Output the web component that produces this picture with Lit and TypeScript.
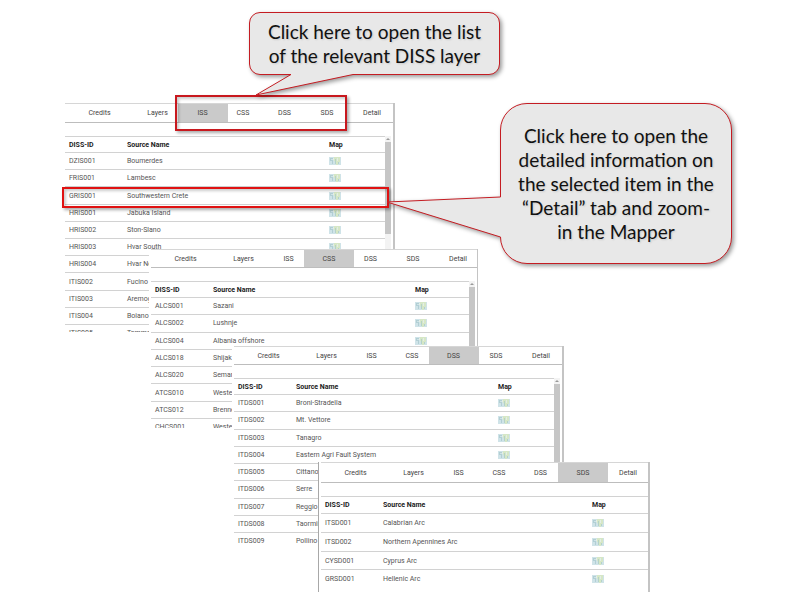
import { LitElement, html, css, svg } from "lit";
import { customElement, property } from "lit/decorators.js";

type Row = [id: string, name: string];

const TABS = ["Credits", "Layers", "ISS", "CSS", "DSS", "SDS", "Detail"];

const ISS: Row[] = [
  ["DZIS001", "Boumerdes"],
  ["FRIS001", "Lambesc"],
  ["GRIS001", "Southwestern Crete"],
  ["HRIS001", "Jabuka Island"],
  ["HRIS002", "Ston-Slano"],
  ["HRIS003", "Hvar South"],
  ["HRIS004", "Hvar North"],
  ["ITIS002", "Fucino"],
  ["ITIS003", "Aremogna"],
  ["ITIS004", "Boiano"],
  ["ITIS005", "Tammaro"],
];
const CSS_ROWS: Row[] = [
  ["ALCS001", "Sazani"],
  ["ALCS002", "Lushnje"],
  ["ALCS004", "Albania offshore"],
  ["ALCS018", "Shijak"],
  ["ALCS020", "Seman"],
  ["ATCS010", "Western"],
  ["ATCS012", "Brenner"],
  ["CHCS001", "Western"],
];
const DSS: Row[] = [
  ["ITDS001", "Broni-Stradella"],
  ["ITDS002", "Mt. Vettore"],
  ["ITDS003", "Tanagro"],
  ["ITDS004", "Eastern Agri Fault System"],
  ["ITDS005", "Cittanova"],
  ["ITDS006", "Serre"],
  ["ITDS007", "Reggio"],
  ["ITDS008", "Taormina"],
  ["ITDS009", "Pollino"],
];
const SDS: Row[] = [
  ["ITSD001", "Calabrian Arc"],
  ["ITSD002", "Northern Apennines Arc"],
  ["CYSD001", "Cyprus Arc"],
  ["GRSD001", "Hellenic Arc"],
];

const mapIcon = html`<svg class="map" viewBox="0 0 12 8" aria-hidden="true">
  ${svg`<rect width="12" height="8" fill="#cfe3e8"/>
  <path d="M5 0h6v5H9v3H7V5L5 4z" fill="#d6e7c6"/>
  <path d="M1 1h3v1H2v1h2v4H3V4H1z" fill="#b2cfd4"/>
  <path d="M6 2h1v5H6zM9 5h1v2H9z" fill="#b4d2c8"/>
  <path d="M4 1h1v2H4zM8 1h1v3H8z" fill="#e2eee6"/>`}
</svg>`;

@customElement("source-panel")
export class SourcePanel extends LitElement {
  @property() active = "ISS";
  @property({ attribute: false }) rows: Row[] = [];
  @property({ type: Boolean }) scroll = false;

  static styles = css`
    :host {
      display: block;
      box-sizing: border-box;
      overflow: hidden;
      padding-left: 2px;
      background: #fff;
      color: #555;
      font: 7px/10px Roboto, "Liberation Sans", sans-serif;
    }
    .frame {
      box-sizing: border-box;
      height: 100%;
      border-right: var(--edge, 2px) solid #c4c4c4;
    }
    .tabs {
      display: grid;
      grid-template-columns: 69px 47px 43px 38px 45px 40px 1fr;
      height: var(--tabs, 17px);
      border-top: 1px solid #d6d6d6;
      border-bottom: 1px solid #bdbdbd;
      margin-bottom: 13px;
    }
    button {
      justify-self: center;
      width: 50px;
      padding: 0;
      border: 0;
      background: none;
      color: #444;
      font: inherit;
    }
    .on {
      background: #cacaca;
    }
    .body {
      display: flex;
      align-items: flex-start;
    }
    table {
      flex: 1;
      height: var(--table, auto);
      border-collapse: collapse;
      table-layout: fixed;
    }
    th,
    td {
      padding: 0 0 0 4px;
      border-top: 1px solid #d2d2d2;
      text-align: left;
      white-space: nowrap;
    }
    th {
      height: var(--head, 15px);
      color: #222;
      font-weight: 700;
    }
    .id {
      width: 54px;
    }
    .where {
      width: var(--where, 56px);
    }
    .map {
      display: block;
      width: 12px;
      height: 8px;
    }
    .bar {
      align-self: stretch;
      width: 6px;
      margin-right: 2px;
      background: #f3f3f3;
    }
    .arrow {
      display: block;
      width: 6px;
      height: 6px;
    }
    .thumb {
      height: var(--thumb, 100%);
      background: #c6c6c6;
    }
  `;

  render() {
    return html`<div class="frame">
      <div class="tabs" role="tablist">
        ${TABS.map(
          (t) =>
            html`<button role="tab" class=${t === this.active ? "on" : ""} aria-selected=${t === this.active}>${t}</button>`
        )}
      </div>
      <div class="body">
        <table>
          <thead>
            <tr><th class="id">DISS-ID</th><th>Source Name</th><th class="where">Map</th></tr>
          </thead>
          <tbody>
            ${this.rows.map(([id, name]) => html`<tr><td>${id}</td><td>${name}</td><td>${mapIcon}</td></tr>`)}
          </tbody>
        </table>
        ${this.scroll
          ? html`<div class="bar">
              <svg class="arrow" viewBox="0 0 6 6" aria-hidden="true"><path d="M1 4l2-2 2 2z" fill="#999" /></svg>
              <div class="thumb"></div>
            </div>`
          : ""}
      </div>
    </div>`;
  }
}

@customElement("app-root")
export class AppRoot extends LitElement {
  static styles = css`
    :host {
      display: block;
      position: relative;
      min-height: 100vh;
      overflow: hidden;
      background: #fff;
    }
    source-panel {
      position: absolute;
      width: 332px;
    }
    .iss {
      left: 63px;
      top: 103px;
      height: 229px;
      --tabs: 18px;
      --table: 205px;
      --thumb: 92px;
    }
    .css {
      left: 149px;
      top: 249px;
      width: 329px;
      height: 179px;
      --edge: 1px;
      --where: 54px;
      --table: 154px;
    }
    .dss {
      left: 232px;
      top: 346px;
      height: 200px;
      --table: 171px;
    }
    .sds {
      left: 318px;
      top: 462px;
      height: 130px;
      border-left: 1px solid #a8a8a8;
      --tabs: 19px;
      --head: 16px;
      --table: 92px;
    }
    .mark {
      position: absolute;
      box-sizing: border-box;
      border: 2px solid #c8181e;
      box-shadow: 2px 2px 3px #0005, inset 2px 2px 3px #0003;
    }
    .mark-tabs {
      left: 175px;
      top: 95px;
      width: 172px;
      height: 36px;
    }
    .mark-row {
      left: 62px;
      top: 187px;
      width: 327px;
      height: 21px;
      border-color: #e01212;
    }
    .note {
      position: absolute;
      display: flex;
      align-items: center;
      justify-content: center;
      color: #111;
      font: 19px/24px Lato, "Liberation Sans", sans-serif;
      text-align: center;
      white-space: nowrap;
      text-shadow: 1px 1px 2px #0002;
    }
    .note p {
      position: relative;
      margin: 0;
    }
    .bubble {
      position: absolute;
      inset: 0;
      width: 100%;
      height: 100%;
      overflow: visible;
      fill: #e8e8e8;
      stroke: #c41c22;
      filter: drop-shadow(2px 2px 2px #0006);
    }
    .note-tabs {
      left: 249px;
      top: 12px;
      width: 251px;
      height: 63px;
    }
    .note-row {
      left: 500px;
      top: 103px;
      width: 232px;
      height: 161px;
    }
  `;

  render() {
    return html`
      <source-panel class="iss" active="ISS" scroll .rows=${ISS}></source-panel>
      <source-panel class="css" active="CSS" scroll .rows=${CSS_ROWS}></source-panel>
      <source-panel class="dss" active="DSS" scroll .rows=${DSS}></source-panel>
      <source-panel class="sds" active="SDS" .rows=${SDS}></source-panel>
      <div class="mark mark-tabs"></div>
      <div class="mark mark-row"></div>
      <div class="note note-tabs">
        <svg class="bubble" viewBox="0 0 251 63" aria-hidden="true">
          <path d="M11 .5H240a10.500 10.500 0 0 1 10.500 10.500V52a10.500 10.500 0 0 1-10.500 10.500H104L7 83 42 62.500H11A10.500 10.500 0 0 1 .5 52V11A10.500 10.500 0 0 1 11 .5z" />
        </svg>
        <p>Click here to open the list<br />of the relevant DISS layer</p>
      </div>
      <div class="note note-row">
        <svg class="bubble" viewBox="0 0 232 161" aria-hidden="true">
          <path d="M27 .5H205A26.500 26.500 0 0 1 231.500 27V134A26.500 26.500 0 0 1 205 160.500H27A26.500 26.500 0 0 1 .5 134L-113 99 .5 94V27A26.500 26.500 0 0 1 27 .5z" />
        </svg>
        <p>
          Click here to open the<br />detailed information on<br />the selected item in the<br />“Detail” tab and zoom-<br />in the Mapper
        </p>
      </div>
    `;
  }
}
